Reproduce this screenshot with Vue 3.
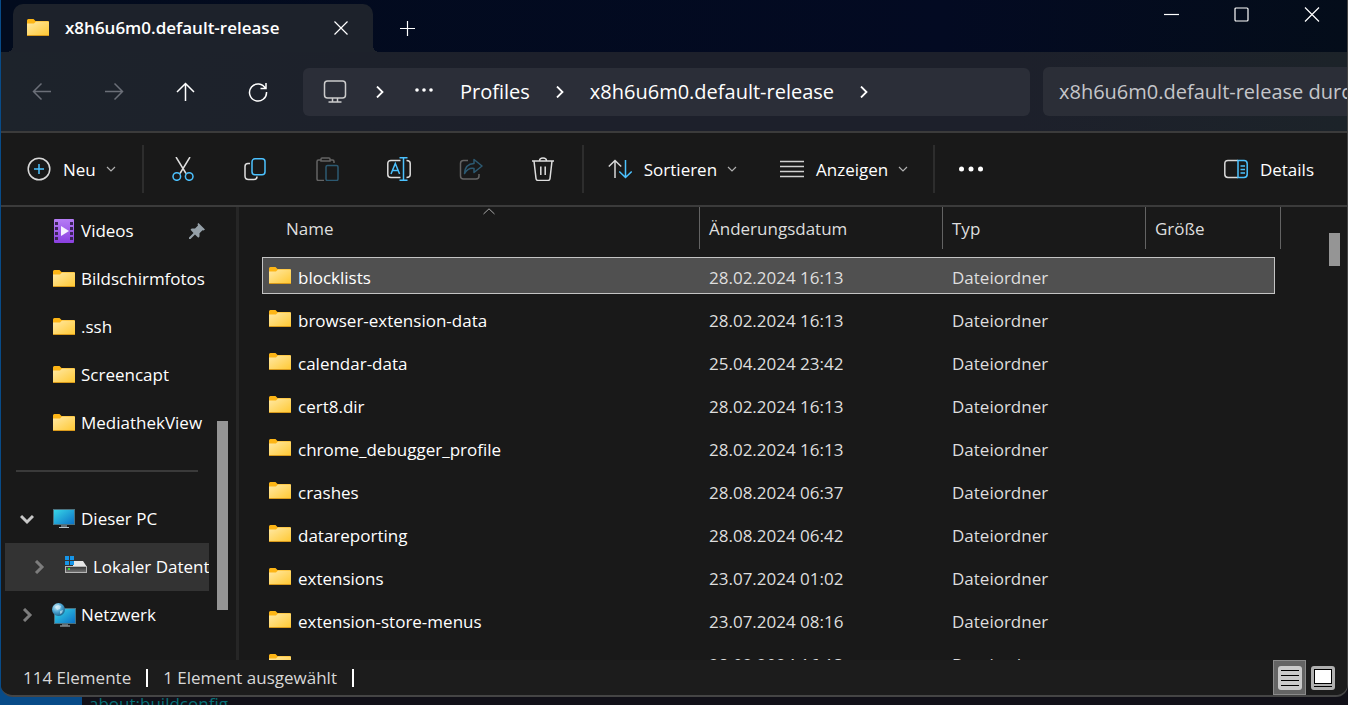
<script setup>
import { ref } from 'vue'

const tools = [
  { id: 'cut', label: 'Ausschneiden' },
  { id: 'copy', label: 'Kopieren' },
  { id: 'paste', label: 'Einfügen', disabled: true },
  { id: 'rename', label: 'Umbenennen' },
  { id: 'share', label: 'Freigeben', disabled: true },
  { id: 'delete', label: 'Löschen' }
]

const places = [
  { name: 'Videos', icon: 'video', pinned: true },
  { name: 'Bildschirmfotos', icon: 'folder' },
  { name: '.ssh', icon: 'folder' },
  { name: 'Screencapt', icon: 'folder' },
  { name: 'MediathekView', icon: 'folder' }
]

const devices = [
  { name: 'Dieser PC', icon: 'pc', arrow: 'down' },
  { name: 'Lokaler Datenträger (C:)', icon: 'drive', arrow: 'right', nested: true, current: true },
  { name: 'Netzwerk', icon: 'network', arrow: 'right' }
]

const columns = [
  { key: 'name', label: 'Name', sorted: true },
  { key: 'date', label: 'Änderungsdatum' },
  { key: 'type', label: 'Typ' },
  { key: 'size', label: 'Größe' }
]

const files = [
  { name: 'blocklists', date: '28.02.2024 16:13' },
  { name: 'browser-extension-data', date: '28.02.2024 16:13' },
  { name: 'calendar-data', date: '25.04.2024 23:42' },
  { name: 'cert8.dir', date: '28.02.2024 16:13' },
  { name: 'chrome_debugger_profile', date: '28.02.2024 16:13' },
  { name: 'crashes', date: '28.08.2024 06:37' },
  { name: 'datareporting', date: '28.08.2024 06:42' },
  { name: 'extensions', date: '23.07.2024 01:02' },
  { name: 'extension-store-menus', date: '23.07.2024 08:16' },
  { name: 'gmp', date: '28.02.2024 16:13' }
]

const selected = ref('blocklists')
</script>

<template>
  <div class="desktop">
    <svg class="defs" width="0" height="0" aria-hidden="true">
      <defs>
        <linearGradient id="g-folder" x1="0" y1="0" x2="1" y2="1">
          <stop offset="0" stop-color="#ffe9a6" />
          <stop offset="1" stop-color="#ffc935" />
        </linearGradient>
        <linearGradient id="g-screen" x1="0" y1="0" x2="1" y2="1">
          <stop offset="0" stop-color="#38d8e8" />
          <stop offset="1" stop-color="#0b6fc6" />
        </linearGradient>
        <linearGradient id="g-video" x1="0" y1="0" x2="0" y2="1">
          <stop offset="0" stop-color="#b57cf5" />
          <stop offset="1" stop-color="#8a3fe0" />
        </linearGradient>
        <linearGradient id="g-drive" x1="0" y1="0" x2="0" y2="1">
          <stop offset="0" stop-color="#333" />
          <stop offset="1" stop-color="#777" />
        </linearGradient>
        <radialGradient id="g-globe" cx="0.35" cy="0.3" r="0.8">
          <stop offset="0" stop-color="#c8ecfa" />
          <stop offset="0.5" stop-color="#4aa3d0" />
          <stop offset="1" stop-color="#17577f" />
        </radialGradient>
        <symbol id="folder" viewBox="0 0 24 24">
          <path d="M1 4.500Q1 3 2.400 3H7.500L9.500 5H22.500V9H1Z" fill="#fdb515" />
          <path d="M1 7.500H8L10 5.500H23V19H1Z" fill="url(#g-folder)" />
          <path d="M1 19.500H23" stroke="#d99a1c" />
        </symbol>
        <symbol id="video" viewBox="0 0 24 24">
          <rect x="2" width="20" height="24" rx="1" fill="url(#g-video)" />
          <path d="M3 3h3v3H3zM3 8h3v3H3zM3 13h3v3H3zM3 18h3v3H3zM18 3h3v3h-3zM18 8h3v3h-3zM18 13h3v3h-3zM18 18h3v3h-3z" fill="#3b2558" />
          <path d="M9 7L17 12L9 17Z" fill="#f6f1ff" />
        </symbol>
        <symbol id="pc" viewBox="0 0 24 24">
          <rect x="1.500" y="2.500" width="21" height="15" fill="url(#g-screen)" stroke="#4b7381" />
          <path d="M9 18h6v2H9z" fill="#5f6d75" />
          <path d="M7 20.500h10" stroke="#b7c4cb" />
        </symbol>
        <symbol id="drive" viewBox="0 0 24 24">
          <path d="M9 6H19L23 12H1V11H9Z" fill="#e6e6e6" />
          <rect x="1.500" y="11.500" width="21" height="6" fill="url(#g-drive)" stroke="#b5b5b5" />
          <path d="M1 1h4v4H1zM6 1h4v4H6zM1 6h4v4H1zM6 6h4v4H6z" fill="#1695e8" />
          <path d="M4 13h2v2H4z" fill="#33e033" />
        </symbol>
        <symbol id="network" viewBox="0 0 24 24">
          <rect x="2.500" y="5.500" width="21" height="15" fill="url(#g-screen)" stroke="#4b7381" />
          <path d="M10 21h6v1.500h-6z" fill="#5f6d75" />
          <path d="M8 23h10" stroke="#b7c4cb" />
          <circle cx="6.500" cy="6.500" r="6.500" fill="url(#g-globe)" />
          <path d="M3 4l3-2 3 1-1 3-3 1zM8 8l3-1-1 3-2 1z" fill="#e3f4fb" opacity=".6" />
        </symbol>
        <symbol id="chevron" viewBox="0 0 12 12">
          <path d="M2 4L6 8L10 4" fill="none" stroke="currentColor" stroke-width="1.200" />
        </symbol>
        <symbol id="crumb" viewBox="0 0 12 12">
          <path d="M3 0.500L8.500 6L3 11.500" fill="none" stroke="#fff" stroke-width="1.800" />
        </symbol>
      </defs>
    </svg>

    <main class="window">
      <header class="titlebar">
        <div class="tab">
          <svg class="i24"><use href="#folder" /></svg>
          <h1>x8h6u6m0.default-release</h1>
          <button class="tab-close" aria-label="Tab schließen">
            <svg width="14" height="14" viewBox="0 0 14 14"><path d="M.5.5l13 13M13.500.5L.5 13.500" /></svg>
          </button>
        </div>
        <button class="tab-add" aria-label="Neuer Tab">
          <svg width="16" height="16" viewBox="0 0 16 16"><path d="M8.500 1v15M1 8.500h15" /></svg>
        </button>
        <div class="caption">
          <button aria-label="Minimieren"><svg width="16" height="16" viewBox="0 0 16 16"><path d="M0 7.500h15" /></svg></button>
          <button aria-label="Maximieren"><svg width="16" height="16" viewBox="0 0 16 16"><rect x="1" y="1" width="13" height="13" rx="1" /></svg></button>
          <button aria-label="Schließen"><svg width="16" height="16" viewBox="0 0 16 16"><path d="M1 .5l14 14M15 .5L1 14.500" /></svg></button>
        </div>
      </header>

      <nav class="navbar" aria-label="Navigation">
        <button class="nav-btn" disabled aria-label="Zurück">
          <svg width="20" height="20" viewBox="0 0 20 20"><path d="M19 9.500H2M9.500 1.500L1.500 9.500L9.500 17.500" /></svg>
        </button>
        <button class="nav-btn" disabled aria-label="Vorwärts">
          <svg width="20" height="20" viewBox="0 0 20 20"><path d="M1 9.500H18M10.500 1.500L18.500 9.500L10.500 17.500" /></svg>
        </button>
        <button class="nav-btn" aria-label="Nach oben">
          <svg width="20" height="20" viewBox="0 0 20 20"><path d="M9.500 19V2M1 10L9.500 1.500L18 10" /></svg>
        </button>
        <button class="nav-btn" aria-label="Aktualisieren">
          <svg width="20" height="20" viewBox="0 0 20 20"><path d="M17.500 6.500A8.500 8.500 0 1 0 18.500 10M18 1V6.500H12.500" /></svg>
        </button>
        <div class="address">
          <svg class="monitor" width="24" height="24" viewBox="0 0 24 24" fill="none" stroke="#ccc" stroke-width="1.500">
            <rect x="1.500" y="1" width="21" height="17" rx="3" /><path d="M9.500 18v3.500M14.500 18v3.500M5.500 22h13" />
          </svg>
          <svg class="c1" width="12" height="12"><use href="#crumb" /></svg>
          <button class="more" aria-label="Weitere Ordner">
            <svg width="18" height="4" viewBox="0 0 18 4" fill="#fff"><circle cx="2" cy="2" r="1.800" /><circle cx="9" cy="2" r="1.800" /><circle cx="16" cy="2" r="1.800" /></svg>
          </button>
          <a class="p1" href="#profiles">Profiles</a>
          <svg width="12" height="12"><use href="#crumb" /></svg>
          <a class="p2" href="#release">x8h6u6m0.default-release</a>
          <svg width="12" height="12"><use href="#crumb" /></svg>
        </div>
        <input class="search" type="text" aria-label="Suche" placeholder="x8h6u6m0.default-release durchsuchen">
      </nav>

      <div class="toolbar" role="toolbar">
        <button class="new">
          <svg width="24" height="24" viewBox="0 0 24 24" fill="none" stroke="#d8d8d8" stroke-width="1.500"><circle cx="12" cy="12" r="10.800" /><path d="M12 7v10M7 12h10" stroke="#4cc2ff" /></svg>
          <span>Neu</span>
          <svg class="chev" width="12" height="12"><use href="#chevron" /></svg>
        </button>
        <i class="sep" />
        <button v-for="t in tools" :key="t.id" class="tool" :disabled="t.disabled" :aria-label="t.label">
          <svg width="24" height="24" viewBox="0 0 24 24" fill="none" stroke="#dedede" stroke-width="1.500">
            <template v-if="t.id === 'cut'">
              <path d="M5 0L15 16.500M19 0L9 16.500" />
              <g stroke="#4cc2ff"><circle cx="5.800" cy="19.500" r="3.800" /><circle cx="18.200" cy="19.500" r="3.800" /></g>
            </template>
            <template v-else-if="t.id === 'copy'">
              <path d="M7 6.500H5Q2 6.500 2 9.500V19Q2 22.500 5.500 22.500H11Q14 22.500 14 19.500" />
              <rect x="9" y="1.800" width="13" height="16" rx="3" stroke="#4cc2ff" />
            </template>
            <template v-else-if="t.id === 'paste'">
              <path d="M6.500 3H3.500Q2 3 2 4.500V22Q2 23.500 3.500 23.500H9M14.500 3H17.500Q19 3 19 4.500V6M7 1H14Q15 1 15 2V4H6V2Q6 1 7 1Z" />
              <rect x="11" y="8.500" width="12" height="15" rx="1.500" stroke="#4cc2ff" />
            </template>
            <template v-else-if="t.id === 'rename'">
              <path d="M13.500 3.500H4Q.8 3.500.8 6.500V17.500Q.8 20.500 4 20.500H13.500M19.500 3.500Q23.200 3.500 23.200 6.500V17.500Q23.200 20.500 19.500 20.500" />
              <path d="M4 17L8.300 6.500L12.600 17M5.500 13.500H11M16.500 1V23M12.500.8H20.500M12.500 23.200H20.500" stroke="#4cc2ff" />
            </template>
            <template v-else-if="t.id === 'share'">
              <path d="M9 3.500H4.500Q1.500 3.500 1.500 6.500V19Q1.500 22 4.500 22H17Q20 22 20 19V17" />
              <path d="M15 2.500L23 9L15 15.500V11.500Q9 10.500 5.500 16.500Q6 7 15 6.500Z" stroke="#4cc2ff" stroke-linejoin="round" />
            </template>
            <template v-else>
              <path d="M1 4H23M8.500 4Q8.500 1 12 1T15.500 4M3 4L5 21.500Q5.200 23.500 7.200 23.500H16.800Q18.800 23.500 19 21.500L21 4M9.800 9.500V18M14.200 9.500V18" />
            </template>
          </svg>
        </button>
        <i class="sep" />
        <button class="sort">
          <svg width="24" height="24" viewBox="0 0 24 24" fill="none" stroke="#d8d8d8" stroke-width="1.500"><path d="M7 21V4M.8 9.500L7 3.500L13.200 9.500" /><path d="M17.500 3V20M11.300 14.500L17.500 20.500L23.700 14.500" stroke="#4cc2ff" /></svg>
          <span>Sortieren</span>
          <svg class="chev" width="12" height="12"><use href="#chevron" /></svg>
        </button>
        <button class="view">
          <svg width="24" height="24" viewBox="0 0 24 24" stroke="#d0d0d0" stroke-width="1.500"><path d="M0 4.500h24M0 9.500h24M0 14.500h24M0 19.500h24" /></svg>
          <span>Anzeigen</span>
          <svg class="chev" width="12" height="12"><use href="#chevron" /></svg>
        </button>
        <i class="sep" />
        <button class="overflow" aria-label="Mehr anzeigen">
          <svg width="24" height="6" viewBox="0 0 24 6" fill="#fff"><circle cx="2.500" cy="3" r="2.500" /><circle cx="12" cy="3" r="2.500" /><circle cx="21.500" cy="3" r="2.500" /></svg>
        </button>
        <button class="details">
          <svg width="24" height="24" viewBox="0 0 24 24" fill="none" stroke="#d8d8d8" stroke-width="1.500"><path d="M14 3.500H4Q.8 3.500.8 6.700V17.300Q.8 20.500 4 20.500H14" /><path d="M14 3.500H20Q23.200 3.500 23.200 6.700V17.300Q23.200 20.500 20 20.500H14ZM16.500 9h4.500M16.500 12.500h4.500M16.500 16h4.500" stroke="#4cc2ff" /></svg>
          <span>Details</span>
        </button>
      </div>

      <div class="body">
        <aside class="sidebar">
          <div class="tree">
            <ul>
              <li v-for="p in places" :key="p.name">
                <a class="node" href="#">
                  <span class="arrow" />
                  <svg class="i24"><use :href="'#' + p.icon" /></svg>
                  <span class="node-name">{{ p.name }}</span>
                  <svg v-if="p.pinned" class="pin" width="16" height="16" viewBox="0 0 16 16"><path d="M9.500 0L16 6.500L14.500 7.500L13.500 7.200L10.500 10.200L10.500 13.500L9.300 14.700L6 11.500L1.500 16L0 16L0 14.500L4.500 10L1.500 6.800L2.700 5.600L6 5.500L9 2.500L8.500 1Z" /></svg>
                </a>
              </li>
            </ul>
            <hr>
            <ul>
              <li v-for="d in devices" :key="d.name">
                <a class="node" :class="{ nested: d.nested, current: d.current }" href="#">
                  <span class="arrow">
                    <svg v-if="d.arrow === 'down'" width="14" height="14" viewBox="0 0 14 14"><path d="M1 4L7 10L13 4" stroke="#c8c8c8" /></svg>
                    <svg v-else width="14" height="14" viewBox="0 0 14 14"><path d="M4 1L10 7L4 13" stroke="#7d7d7d" /></svg>
                  </span>
                  <svg class="i24"><use :href="'#' + d.icon" /></svg>
                  <span class="node-name">{{ d.name }}</span>
                </a>
              </li>
            </ul>
          </div>
          <div class="track"><div class="thumb side-thumb" /></div>
        </aside>

        <section class="content">
          <table>
            <colgroup><col><col class="w-date"><col class="w-type"><col class="w-size"></colgroup>
            <thead>
              <tr>
                <th v-for="c in columns" :key="c.key" :class="'h-' + c.key" scope="col">
                  <div class="head">
                    {{ c.label }}
                    <svg v-if="c.sorted" class="sorted" width="12" height="7" viewBox="0 0 12 7"><path d="M.5 6L6 .8L11.500 6" fill="none" stroke="#a8a8a8" /></svg>
                  </div>
                </th>
              </tr>
            </thead>
            <tbody>
              <tr v-for="f in files" :key="f.name" :class="{ selected: f.name === selected }" @click="selected = f.name">
                <td><div class="file"><svg class="i24"><use href="#folder" /></svg><span>{{ f.name }}</span></div></td>
                <td>{{ f.date }}</td>
                <td>Dateiordner</td>
                <td />
              </tr>
            </tbody>
          </table>
          <div class="thumb list-thumb" />
        </section>
      </div>

      <footer class="status">
        <span>114 Elemente</span><i />
        <span>1 Element ausgewählt</span><i />
        <div class="modes">
          <button class="active" aria-label="Details">
            <svg width="24" height="24" viewBox="0 0 24 24"><rect width="24" height="24" rx="3" fill="#cacaca" /><path d="M3 4.500h18M3 9.500h18M3 14.500h18M3 19.500h18" stroke="#000" /></svg>
          </button>
          <button aria-label="Große Miniaturansichten">
            <svg width="24" height="24" viewBox="0 0 24 24"><rect width="24" height="24" rx="3" fill="#b0b0b0" /><rect x="3.500" y="3.500" width="17" height="14" fill="#fff" stroke="#000" /><path d="M3 20.500h18" stroke="#000" /></svg>
          </button>
        </div>
      </footer>
    </main>
    <div class="behind"><span>about:buildconfig</span></div>
  </div>
</template>

<style>
body { background: #111018; }
</style>

<style scoped>
* { box-sizing: border-box; }
.desktop {
  display: flex;
  flex-direction: column;
  height: 100vh;
  overflow: hidden;
  padding-left: 1px;
  background: linear-gradient(90deg, #084b88 82px, #111018 82px);
  font: 17px/24px "Open Sans", "Noto Sans", sans-serif;
  color: #fff;
}
.defs { position: absolute; }
.window {
  flex: 1;
  min-height: 0;
  display: flex;
  flex-direction: column;
  overflow: hidden;
  background: #191919;
  border: solid #454545;
  border-width: 0 1px 2px 0;
  border-radius: 0 0 12px 12px;
}
button {
  display: flex;
  align-items: center;
  justify-content: center;
  padding: 0;
  border: 0;
  background: none;
  color: inherit;
  font: inherit;
}
svg { display: block; flex: none; }
a { color: inherit; text-decoration: none; }
.i24 { width: 24px; height: 24px; }

.titlebar {
  flex: none;
  display: flex;
  height: 52px;
  padding-left: 12px;
  background: linear-gradient(90deg, #020b1d, #030a22 70%, #040d1a);
}
.titlebar button path, .titlebar button rect { fill: none; stroke: #fff; stroke-width: 1.2; }
.tab {
  position: relative;
  display: flex;
  align-items: center;
  width: 360px;
  margin-top: 4px;
  padding: 0 25px 0 13px;
  border-radius: 10px 10px 0 0;
  background: #1d222b;
}
.tab::before, .tab::after {
  content: "";
  position: absolute;
  bottom: 0;
  width: 6px;
  height: 6px;
}
.tab::before { right: 100%; background: radial-gradient(circle at 0 0, transparent 6px, #1d222b 6px); }
.tab::after { left: 100%; background: radial-gradient(circle at 100% 0, transparent 6px, #1d222b 6px); }
.tab h1 {
  flex: 1;
  margin: 0 0 0 15px;
  font-size: 17px;
  line-height: 24px;
  font-weight: 600;
}
.tab-add { width: 68px; padding-top: 4px; }
.caption { display: flex; margin-left: auto; height: 30px; }
.caption button { width: 70px; }

.navbar {
  flex: none;
  display: flex;
  align-items: center;
  height: 81px;
  padding-left: 5px;
  border-bottom: 2px solid #3b3b3b;
  background: linear-gradient(90deg, #1d232b, #1d202b 40%, #1d202b 75%, #1c2329);
}
.nav-btn { width: 72px; height: 48px; }
.nav-btn path { fill: none; stroke: #fff; stroke-width: 1.5; }
.nav-btn:disabled path { stroke: #6b6f78; }
.address {
  flex: 1;
  display: flex;
  align-items: center;
  height: 48px;
  margin: 0 13px 0 9px;
  padding-left: 20px;
  border-radius: 6px;
  background: #2b2e38;
  font-size: 20px;
}
.c1 { margin-left: 27px; }
.more { width: 18px; margin: 0 27px 4px 29px; }
.p1 { margin-right: 24px; }
.p2 { margin: 0 24px; }
.search {
  flex: 0 0 304px;
  min-width: 0;
  height: 49px;
  padding: 0 0 0 16px;
  border: 0;
  border-radius: 6px 0 0 6px;
  background: #2b2e37;
  color: #fff;
  font: inherit;
  font-size: 20px;
}
.search::placeholder { color: #c5c6ca; opacity: 1; }

.toolbar {
  flex: none;
  display: flex;
  align-items: center;
  height: 74px;
  padding: 0 33px 0 26px;
  border-bottom: 2px solid #3b3b3b;
}
.toolbar button { height: 48px; }
.sep { width: 2px; height: 48px; background: #2d2d2d; }
.toolbar span { margin-left: 12px; padding-top: 2px; }
.chev { margin-left: 9px; color: #b0b0b0; }
.new { margin-right: 25px; }
.tool { width: 72px; }
.tool:disabled svg { opacity: .38; }
.new + .sep { margin-right: 3px; }
.tool + .sep { margin-left: 3px; margin-right: 24px; }
.view { margin-left: 42px; margin-right: 24px; }
.overflow { margin-left: 24px; }
.details { margin-left: auto; }

.body { flex: 1; min-height: 0; display: flex; }
.sidebar {
  flex: none;
  display: flex;
  width: 238px;
  padding-left: 4px;
  border-right: 3px solid #262626;
}
.tree { width: 204px; overflow: hidden; }
ul { margin: 0; padding: 0; list-style: none; }
.node { display: flex; align-items: center; height: 48px; white-space: nowrap; }
.node.nested { padding-left: 12px; }
.node.current { background: #333; }
.node path { fill: none; }
.arrow { display: flex; justify-content: center; flex: none; width: 43px; margin-right: 4px; }
.arrow path { stroke-width: 3; }
.node-name { margin-left: 5px; }
.node .pin { margin: 0 4px 0 auto; }
.node .pin path { fill: #95a0a8; }
hr { height: 2px; margin: 23px 11px; border: 0; background: #3a3a3a; }
.track { flex: 1; padding-left: 8px; }
.thumb { width: 11px; background: #959595; }
.side-thumb { height: 189px; margin-top: 214px; }

.content { flex: 1; min-width: 0; display: flex; overflow: hidden; padding-left: 23px; }
table { flex: 1; table-layout: fixed; width: 100%; border-spacing: 0; text-align: left; align-self: flex-start; }
.w-date { width: 243px; }
.w-type { width: 203px; }
.w-size { width: 135px; }
th { padding: 0 0 8px; font-weight: 400; color: #dedede; }
.head {
  position: relative;
  height: 42px;
  padding: 10px 0 0 9px;
  border-right: 1px solid #636363;
}
.h-name .head { padding-left: 24px; }
.sorted { position: absolute; top: 1px; left: calc(50% + 2px); }
td {
  height: 43px;
  padding: 4px 0 0 9px;
  border-bottom: 6px solid transparent;
  background-clip: padding-box;
  color: #dedede;
  white-space: nowrap;
}
td:first-child { padding: 0 0 0 6px; color: #fff; }
td:last-child { border-right: 6px solid transparent; }
.file { display: flex; align-items: center; }
.file span { margin-left: 6px; padding-top: 4px; }
.selected td { background-color: #505050; box-shadow: inset 0 1px #c4c4c4, inset 0 -1px #c4c4c4; }
.selected td:first-child { box-shadow: inset 1px 1px #c4c4c4, inset 0 -1px #c4c4c4; }
.selected td:last-child { box-shadow: inset -1px -1px #c4c4c4, inset 0 1px #c4c4c4; }
.list-thumb { flex: none; height: 33px; margin: 26px 7px 0 48px; }

.status {
  flex: none;
  display: flex;
  align-items: center;
  height: 35px;
  padding-left: 22px;
  background: #1c1c1c;
  color: #d8d8d8;
}
.status span { padding-top: 1px; }
.status i { width: 2px; height: 18px; margin: 0 15px; background: #fff; }
.modes { display: flex; margin-left: auto; padding-right: 8px; }
.modes button { width: 33px; height: 35px; }
.modes .active { border: 1px solid #8a8a8a; background: #646464; }
.behind { flex: none; height: 8px; padding-left: 88px; overflow: hidden; color: #087078; }
.behind span { display: block; line-height: 14px; }
</style>
